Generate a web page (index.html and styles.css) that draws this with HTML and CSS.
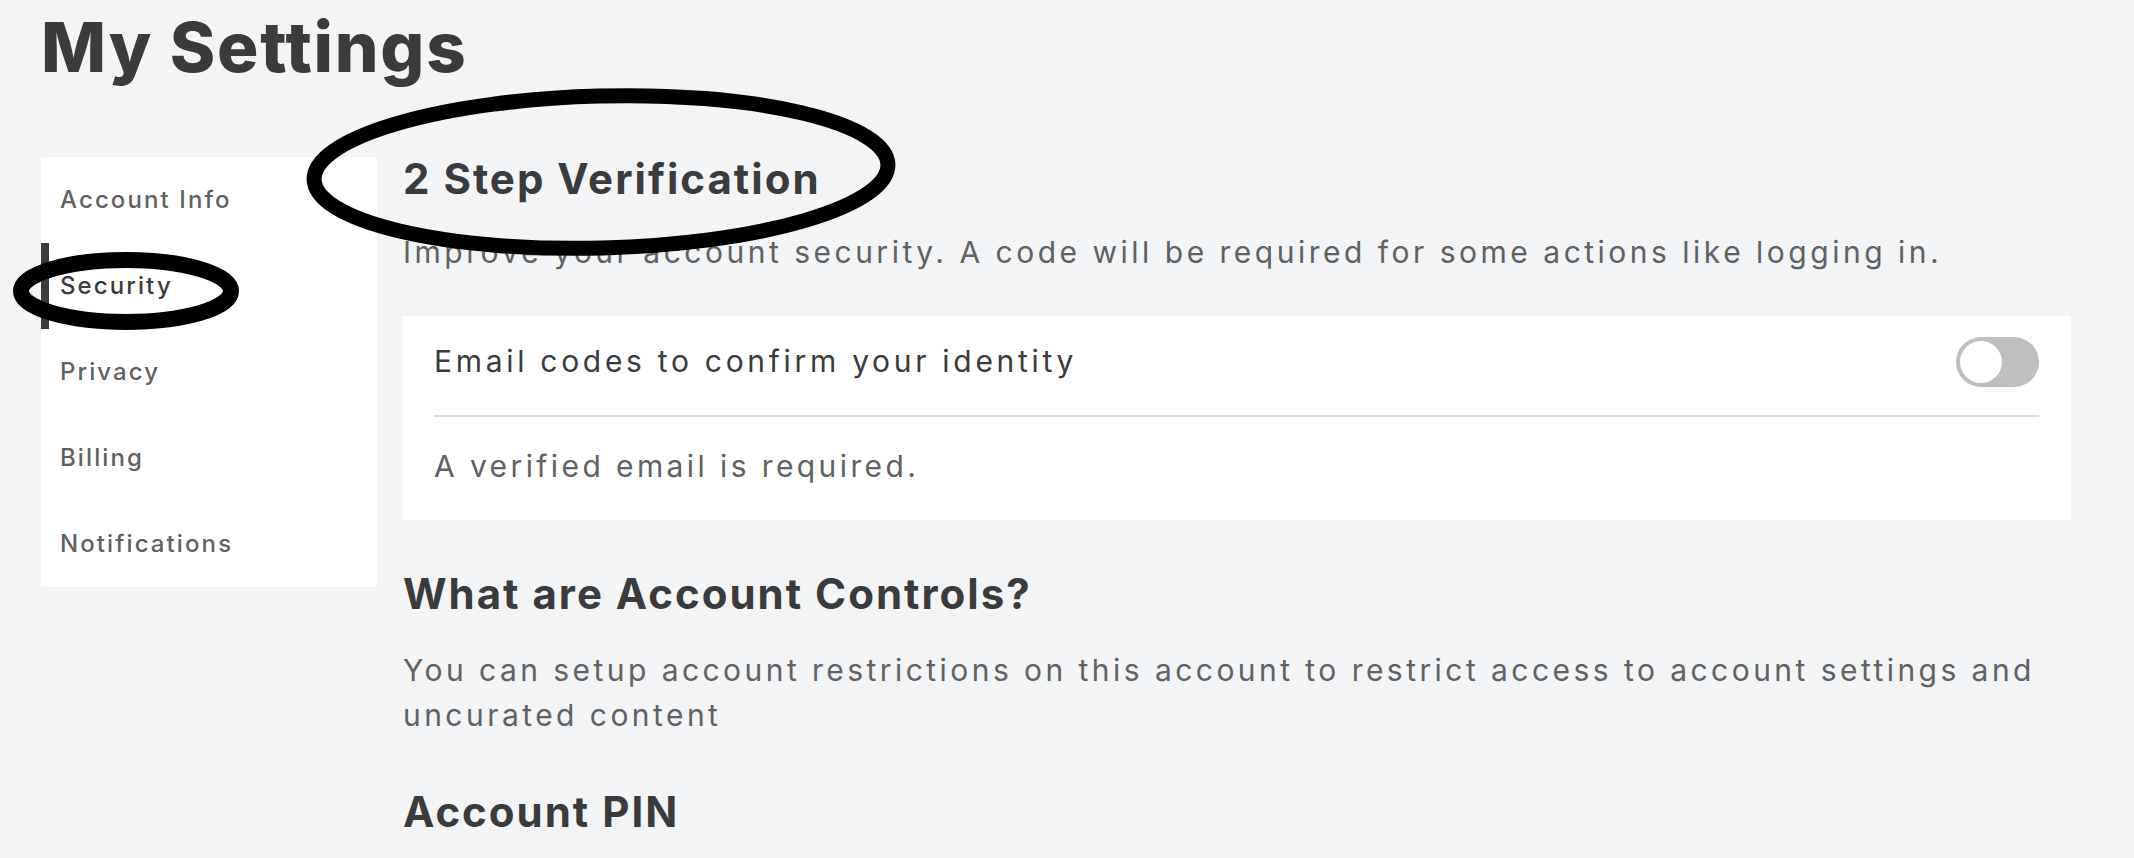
FILE: index.html
```html
<!DOCTYPE html>
<html lang="en">
<head>
<meta charset="utf-8">
<title>My Settings</title>
<link rel="stylesheet" href="styles.css">
</head>
<body>
<div class="page">
  <h1 class="page-title">My Settings</h1>
  <div class="layout">
    <nav class="side-nav">
      <a class="nav-item">Account Info</a>
      <a class="nav-item active">Security</a>
      <a class="nav-item">Privacy</a>
      <a class="nav-item">Billing</a>
      <a class="nav-item">Notifications</a>
    </nav>
    <main class="content">
      <h2 class="section-title">2 Step Verification</h2>
      <p class="section-desc">Improve your account security. A code will be required for some actions like logging in.</p>
      <div class="card">
        <div class="card-row">
          <span class="card-label">Email codes to confirm your identity</span>
          <span class="toggle"><span class="toggle-knob"></span></span>
        </div>
        <div class="card-note">A verified email is required.</div>
      </div>
      <h2 class="section-title controls-title">What are Account Controls?</h2>
      <p class="section-desc controls-desc">You can setup account restrictions on this account to restrict access to account settings and uncurated content</p>
      <h2 class="section-title pin-title">Account PIN</h2>
    </main>
  </div>
</div>
<svg class="annotations" width="2134" height="858" viewBox="0 0 2134 858" aria-hidden="true">
  <ellipse cx="601" cy="172" rx="287" ry="76" transform="rotate(-1.5 601 172)" fill="none" stroke="#000" stroke-width="15"/>
  <ellipse cx="126" cy="291" rx="105" ry="31" fill="none" stroke="#000" stroke-width="16"/>
</svg>
</body>
</html>
```

FILE: styles.css
```css
html, body {
  margin: 0;
  padding: 0;
  background: #f2f4f5;
}

body {
  font-family: "Inter", "Liberation Sans", sans-serif;
  color: #393b3d;
  width: 2134px;
  height: 858px;
  overflow: hidden;
  position: relative;
}

.page {
  padding: 0 63px 0 41px;
}

.page-title {
  margin: 0;
  padding-top: 6px;
  font-size: 69px;
  line-height: 83px;
  font-weight: 800;
  letter-spacing: 1.7px;
  color: #393b3d;
}

.layout {
  display: flex;
  align-items: flex-start;
  gap: 26px;
  margin-top: 68px;
}

.side-nav {
  width: 336px;
  flex: none;
  background: #ffffff;
  display: flex;
  flex-direction: column;
}

.nav-item {
  display: block;
  height: 86px;
  line-height: 86px;
  font-size: 24px;
  font-weight: 500;
  color: #606162;
  letter-spacing: 2.1px;
  border-left: 8px solid transparent;
  padding-left: 11px;
}

.nav-item.active {
  color: #393b3d;
  border-left-color: #393b3d;
}

.content {
  flex: 1;
  min-width: 0;
}

.section-title {
  margin: 0;
  font-size: 42px;
  line-height: 44px;
  font-weight: 700;
  letter-spacing: 2px;
  color: #393b3d;
}

.section-desc {
  margin: 31px 0 0;
  font-size: 30px;
  line-height: 40px;
  font-weight: 400;
  color: #606162;
  letter-spacing: 3.5px;
}

.card {
  margin-top: 44px;
  background: #ffffff;
  padding: 0 32px 0 31px;
}

.card-row {
  display: flex;
  justify-content: space-between;
  align-items: flex-start;
  padding: 21px 0 28px;
  border-bottom: 2px solid #dedede;
}

.card-label {
  margin-top: 4px;
  font-size: 30px;
  line-height: 40px;
  color: #393b3d;
  letter-spacing: 3.7px;
}

.toggle {
  width: 83px;
  height: 50px;
  border-radius: 25px;
  background: #bdbebe;
  box-sizing: border-box;
  padding: 4px;
  display: flex;
  align-items: center;
}

.toggle-knob {
  width: 42px;
  height: 42px;
  border-radius: 50%;
  background: #ffffff;
}

.card-note {
  padding: 29px 0 34px;
  font-size: 30px;
  line-height: 40px;
  color: #606162;
  letter-spacing: 3.4px;
}

.controls-title {
  margin-top: 52px;
}

.controls-desc {
  margin-top: 32px;
  line-height: 45px;
  letter-spacing: 3.45px;
}

.pin-title {
  margin-top: 52px;
}

.annotations {
  position: absolute;
  top: 0;
  left: 0;
  pointer-events: none;
}
```
